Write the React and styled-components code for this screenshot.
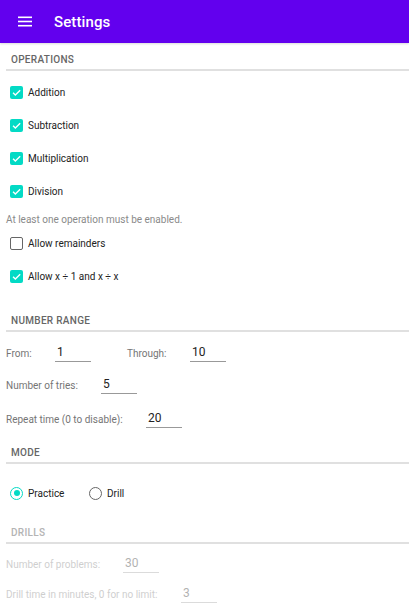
import React from "react";
import styled, { createGlobalStyle } from "styled-components";

const GlobalStyle = createGlobalStyle`
  html, body {
    margin: 0;
    padding: 0;
    background: #fff;
    font-family: Roboto, "Liberation Sans", sans-serif;
  }
`;

const Settings = () => {
  return (
    <Page>
      <GlobalStyle />
      <AppBar>
        <svg width="14" height="11" viewBox="0 0 14 11">
          <rect x="0" y="0.5" width="14" height="1.6" fill="#fff" />
          <rect x="0" y="4.7" width="14" height="1.6" fill="#fff" />
          <rect x="0" y="8.9" width="14" height="1.6" fill="#fff" />
        </svg>
        <Title>Settings</Title>
      </AppBar>

      <Content>
        <SectionTitle>OPERATIONS</SectionTitle>
        <CheckRow><Box checked /><Label>Addition</Label></CheckRow>
        <CheckRow><Box checked /><Label>Subtraction</Label></CheckRow>
        <CheckRow><Box checked /><Label>Multiplication</Label></CheckRow>
        <CheckRow><Box checked /><Label>Division</Label></CheckRow>
        <Hint>At least one operation must be enabled.</Hint>
        <CheckRow><Box /><Label>Allow remainders</Label></CheckRow>
        <CheckRow><Box checked /><Label>Allow x ÷ 1 and x ÷ x</Label></CheckRow>

        <SectionTitle $top={11}>NUMBER RANGE</SectionTitle>
        <FieldRow $h={32}>
          <FieldLabel $w={49}>From:</FieldLabel>
          <Input $w={36}>1</Input>
          <FieldLabel $w={63} $left={36}>Through:</FieldLabel>
          <Input $w={36}>10</Input>
        </FieldRow>
        <FieldRow $h={33}>
          <FieldLabel $w={95}>Number of tries:</FieldLabel>
          <Input $w={36}>5</Input>
        </FieldRow>
        <FieldRow $h={34}>
          <FieldLabel $w={140}>Repeat time (0 to disable):</FieldLabel>
          <Input $w={36}>20</Input>
        </FieldRow>

        <SectionTitle $top={0}>MODE</SectionTitle>
        <RadioRow>
          <RadioOption>
            <Radio checked />
            <Label>Practice</Label>
          </RadioOption>
          <RadioOption>
            <Radio />
            <Label>Drill</Label>
          </RadioOption>
        </RadioRow>

        <SectionTitle $top={0} $muted>DRILLS</SectionTitle>
        <FieldRow $h={30} $muted>
          <FieldLabel $w={117}>Number of problems:</FieldLabel>
          <Input $w={36}>30</Input>
        </FieldRow>
        <FieldRow $h={30} $muted>
          <FieldLabel $w={175}>Drill time in minutes, 0 for no limit:</FieldLabel>
          <Input $w={36}>3</Input>
        </FieldRow>
      </Content>
    </Page>
  );
};

const Box = ({ checked }) => (
  <CheckBox $checked={checked}>
    {checked && (
      <svg width="11" height="11" viewBox="0 0 24 24">
        <path
          d="M4.5 12.5l5 5L20 7"
          fill="none"
          stroke="#fff"
          strokeWidth="3"
        />
      </svg>
    )}
  </CheckBox>
);

export default function App() {
  return <Settings />;
}

const Page = styled.div`
  width: 409px;
  height: 606px;
  overflow: hidden;
  background: #fff;
`;

const AppBar = styled.div`
  height: 43px;
  background: #6200ee;
  display: flex;
  align-items: center;
  padding-left: 18px;
  box-sizing: border-box;
  box-shadow: 0 1px 2px rgba(0, 0, 0, 0.15);
`;

const Title = styled.div`
  margin-left: 22px;
  color: #fff;
  font-size: 15px;
  font-weight: 500;
  letter-spacing: 0.1px;
`;

const Content = styled.div`
  padding-left: 6px;
`;

const SectionTitle = styled.div`
  margin-top: ${(p) => (p.$top ?? 0)}px;
  padding: 11px 0 3px 5px;
  line-height: 12px;
  font-size: 10px;
  font-weight: 500;
  letter-spacing: 0.3px;
  color: ${(p) => (p.$muted ? "#b4b4b4" : "#666")};
  border-bottom: 2px solid #e0e0e0;
  margin-bottom: 5px;
`;

const CheckRow = styled.div`
  height: 33px;
  display: flex;
  align-items: center;
  padding-left: 4px;
`;

const CheckBox = styled.span`
  width: 13px;
  height: 13px;
  box-sizing: border-box;
  border-radius: 2px;
  display: flex;
  align-items: center;
  justify-content: center;
  background: ${(p) => (p.$checked ? "#03dac5" : "#fff")};
  border: ${(p) => (p.$checked ? "none" : "1.5px solid #666")};
  margin-right: 5px;
`;

const Label = styled.span`
  font-size: 10px;
  color: #222;
`;

const Hint = styled.div`
  margin-top: 5px;
  line-height: 14px;
  font-size: 10px;
  color: #8a8a8a;
`;

const FieldRow = styled.div`
  height: ${(p) => p.$h}px;
  display: flex;
  align-items: center;
  opacity: ${(p) => (p.$muted ? 0.35 : 1)};
`;

const FieldLabel = styled.span`
  width: ${(p) => p.$w}px;
  margin-left: ${(p) => p.$left || 0}px;
  font-size: 10px;
  color: #757575;
  white-space: nowrap;
`;

const Input = styled.span`
  width: ${(p) => p.$w}px;
  box-sizing: border-box;
  padding: 0 0 2px 2px;
  font-size: 12px;
  line-height: 14px;
  color: #222;
  border-bottom: 1px solid #999;
`;

const RadioRow = styled.div`
  height: 46px;
  display: flex;
  align-items: center;
  padding-left: 4px;
  margin-top: 6px;
`;

const RadioOption = styled.div`
  display: flex;
  align-items: center;
  width: 79px;
`;

const Radio = styled.span`
  width: 13px;
  height: 13px;
  box-sizing: border-box;
  border-radius: 50%;
  border: 1.5px solid ${(p) => (p.checked ? "#03dac5" : "#666")};
  margin-right: 5px;
  display: flex;
  align-items: center;
  justify-content: center;
  &::after {
    content: "";
    width: 6px;
    height: 6px;
    border-radius: 50%;
    background: ${(p) => (p.checked ? "#03dac5" : "transparent")};
  }
`;
